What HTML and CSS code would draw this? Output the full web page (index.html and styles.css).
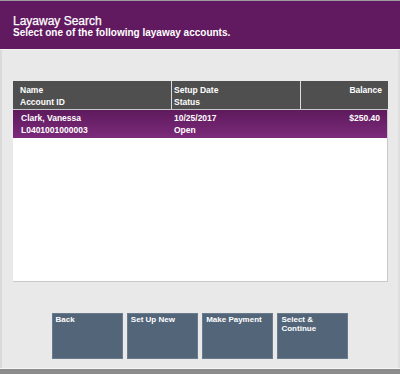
FILE: index.html
```html
<!DOCTYPE html>
<html>
<head>
<meta charset="utf-8">
<link rel="stylesheet" href="styles.css">
</head>
<body>
<div class="frame">
  <div class="header">
    <div class="title">Layaway Search</div>
    <div class="subtitle">Select one of the following layaway accounts.</div>
  </div>
  <div class="main">
    <div class="table">
      <div class="thead">
        <div class="th c1">Name<br>Account ID</div>
        <div class="th c2">Setup Date<br>Status</div>
        <div class="th c3 right">Balance</div>
      </div>
      <div class="row selected">
        <div class="td c1">Clark, Vanessa<br>L0401001000003</div>
        <div class="td c2">10/25/2017<br>Open</div>
        <div class="td c3 right">$250.40</div>
      </div>
      <div class="tbody"></div>
    </div>
    <div class="buttons">
      <div class="btn">Back</div>
      <div class="btn">Set Up New</div>
      <div class="btn">Make Payment</div>
      <div class="btn">Select &amp;<br>Continue</div>
    </div>
  </div>
  <div class="footer"></div>
</div>
</body>
</html>
```
FILE: styles.css
```css
* { box-sizing: border-box; }
html, body { margin: 0; padding: 0; }
body {
  width: 400px;
  height: 374px;
  overflow: hidden;
  background: #e9e9e9;
  font-family: "Liberation Sans", Arial, sans-serif;
  color: #fff;
}
.frame {
  height: 374px;
  display: flex;
  flex-direction: column;
  border-top: 1px solid #9c9c9c;
}
.header {
  height: 49px;
  background: #611a5f;
  padding: 15px 13px 0;
  border-bottom: 1px solid #f3f3f3;
}
.title {
  font-size: 12px;
  line-height: 11px;
  -webkit-text-stroke: 0.25px #fff;
}
.subtitle {
  font-size: 10px;
  font-weight: bold;
  line-height: 11px;
}
.main {
  flex: 1;
  padding: 31px 12px 0 11px;
  border-left: 2px solid #dadada;
  border-right: 2px solid #dedede;
}
.table {
  width: 375px;
  display: flex;
  flex-direction: column;
}
.thead, .row {
  display: grid;
  grid-template-columns: 159px 129px 1fr;
  font-size: 8.5px;
  font-weight: bold;
}
.thead {
  height: 29px;
  background: #4f4f4f;
  line-height: 12px;
  border-bottom: 1px solid #c9c9c9;
}
.th { padding-top: 2.5px; }
.th.c1, .th.c2 { border-right: 1px solid #dcdcdc; }
.c1 { padding-left: 7px; }
.c2 { padding-left: 2px; }
.c3 { padding-right: 6px; }
.right { text-align: right; }
.row {
  height: 28px;
  line-height: 11.5px;
  background: linear-gradient(#5e1a5c, #7c2a7a);
  border-right: 1px solid #c9c9c9;
}
.td { padding-top: 3px; }
.td.c1 { padding-left: 8px; }
.td.c3 { padding-right: 7px; }
.tbody {
  height: 144px;
  background: #fff;
  border-right: 1px solid #c9c9c9;
  border-bottom: 1px solid #c9c9c9;
}
.buttons {
  display: flex;
  justify-content: center;
  gap: 4.3px;
  margin-top: 31px;
  margin-left: -13px;
  width: 400px;
}
.btn {
  width: 71px;
  height: 46px;
  background: #536579;
  border: 1px solid #6a7b8e;
  padding: 1px 3px 0;
  font-size: 8px;
  font-weight: bold;
  line-height: 9px;
}
.footer {
  height: 6px;
  background: #8c8c8c;
  border-top: 1px solid #f5f5f5;
}
```
